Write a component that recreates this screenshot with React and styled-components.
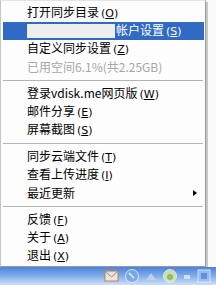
import React from "react"
import styled, { createGlobalStyle } from "styled-components"

const GlobalStyle = createGlobalStyle`
  html, body {
    margin: 0;
    padding: 0;
    background: #fbfbfb;
    width: 216px;
    height: 285px;
    overflow: hidden;
  }
`

const items = [
  { label: "打开同步目录", key: "O" },
  { label: "帐户设置", key: "S", active: true },
  { label: "自定义同步设置", key: "Z" },
  { label: "已用空间6.1%(共2.25GB)", disabled: true },
  { sep: true },
  { label: "登录vdisk.me网页版", key: "W" },
  { label: "邮件分享", key: "E" },
  { label: "屏幕截图", key: "S" },
  { sep: true },
  { label: "同步云端文件", key: "T" },
  { label: "查看上传进度", key: "I" },
  { label: "最近更新", sub: true },
  { sep: true },
  { label: "反馈", key: "F" },
  { label: "关于", key: "A" },
  { label: "退出", key: "X" },
]

export default function App() {
  return (
    <Page>
      <GlobalStyle />
      <Top>
        <Menu>
          {items.map((it, i) =>
            it.sep ? (
              <Separator key={i} />
            ) : (
              <Item key={i} active={it.active} disabled={it.disabled}>
                {it.active && <AccountBox />}
                <Label>
                  {it.label}
                  {it.key && (
                    <Hotkey>
                      (<u>{it.key}</u>)
                    </Hotkey>
                  )}
                </Label>
                {it.sub && <Arrow />}
              </Item>
            )
          )}
        </Menu>
      </Top>
      <Taskbar>
        <Tray>
          <svg width="16" height="14" viewBox="0 0 16 14">
            <rect x="1" y="2" width="13" height="10" fill="#f4f0e8" stroke="#d07830" />
            <path d="M1 2 L7.5 8 L14 2" fill="none" stroke="#d07830" />
          </svg>
          <svg width="16" height="16" viewBox="0 0 16 16">
            <circle cx="8" cy="8" r="6.5" fill="#7aa6e4" stroke="#e8f0fc" />
            <path d="M5 5 L10 10" stroke="#fff" strokeWidth="1.5" />
          </svg>
          <svg width="14" height="14" viewBox="0 0 14 14">
            <path d="M2 11 L7 4 L12 11 Z" fill="#c4d6ee" />
          </svg>
          <svg width="16" height="16" viewBox="0 0 16 16">
            <circle cx="8" cy="8" r="6.5" fill="#d8e8b0" stroke="#f0f4e0" />
            <circle cx="8" cy="9" r="3" fill="#98c040" />
          </svg>
          <svg width="10" height="14" viewBox="0 0 10 14">
            <rect x="2" y="6" width="6" height="4" fill="#dce8f8" />
          </svg>
          <svg width="16" height="16" viewBox="0 0 16 16">
            <rect x="2" y="2" width="12" height="12" fill="#9cc0ee" stroke="#e4eefc" />
            <rect x="5" y="5" width="6" height="6" fill="#5a8ce0" />
          </svg>
        </Tray>
      </Taskbar>
    </Page>
  )
}

const Page = styled.div`
  width: 216px;
  height: 285px;
  display: flex;
  flex-direction: column;
  font-family: "Noto Sans CJK SC", "DejaVu Sans", sans-serif;
  font-size: 12px;
`

const Top = styled.div`
  flex: 1;
  display: flex;
  align-items: flex-start;
`

const Menu = styled.div`
  box-sizing: border-box;
  width: 206px;
  padding: 3px 1px 1px 2px;
  background: #fdfdfd;
  border-left: 1px solid #c4c4c4;
  border-top: 1px solid #e4e4e4;
  border-right: 1px solid #9a9a9a;
  border-bottom: 1px solid #9a9a9a;
  box-shadow: 2px 2px 0 #c8c8c8;
  display: flex;
  flex-direction: column;
`

const Item = styled.div`
  position: relative;
  height: 18px;
  display: flex;
  align-items: center;
  padding-left: 24px;
  background: ${p => (p.active ? "#316ac5" : "transparent")};
  color: ${p => (p.active ? "#ffffff" : p.disabled ? "#a7a7a7" : "#000000")};
`

const AccountBox = styled.div`
  width: 88px;
  height: 14px;
  margin-right: 1px;
  background: #eeeeee;
  flex-shrink: 0;
`

const Label = styled.span`
  line-height: 18px;
  white-space: nowrap;
`

const Hotkey = styled.span`
  margin-left: 2px;
  font-family: "DejaVu Sans", sans-serif;
  font-size: 11px;
`

const Arrow = styled.span`
  position: absolute;
  right: 7px;
  top: 6px;
  width: 0;
  height: 0;
  border-top: 3.5px solid transparent;
  border-bottom: 3.5px solid transparent;
  border-left: 4px solid #000;
`

const Separator = styled.div`
  height: 9px;
  display: flex;
  align-items: center;

  &::before {
    content: "";
    flex: 1;
    margin-right: 1px;
    height: 1px;
    background: #b4b4b4;
    box-shadow: 0 1px 0 #ffffff;
  }
`

const Taskbar = styled.div`
  height: 18px;
  background: linear-gradient(180deg, #4a84dc 0%, #7aa8e8 45%, #cfe0f6 100%);
  display: flex;
  justify-content: flex-end;
  align-items: center;
`

const Tray = styled.div`
  display: flex;
  align-items: center;
  gap: 4px;
  padding-right: 4px;
  opacity: 0.85;
`
